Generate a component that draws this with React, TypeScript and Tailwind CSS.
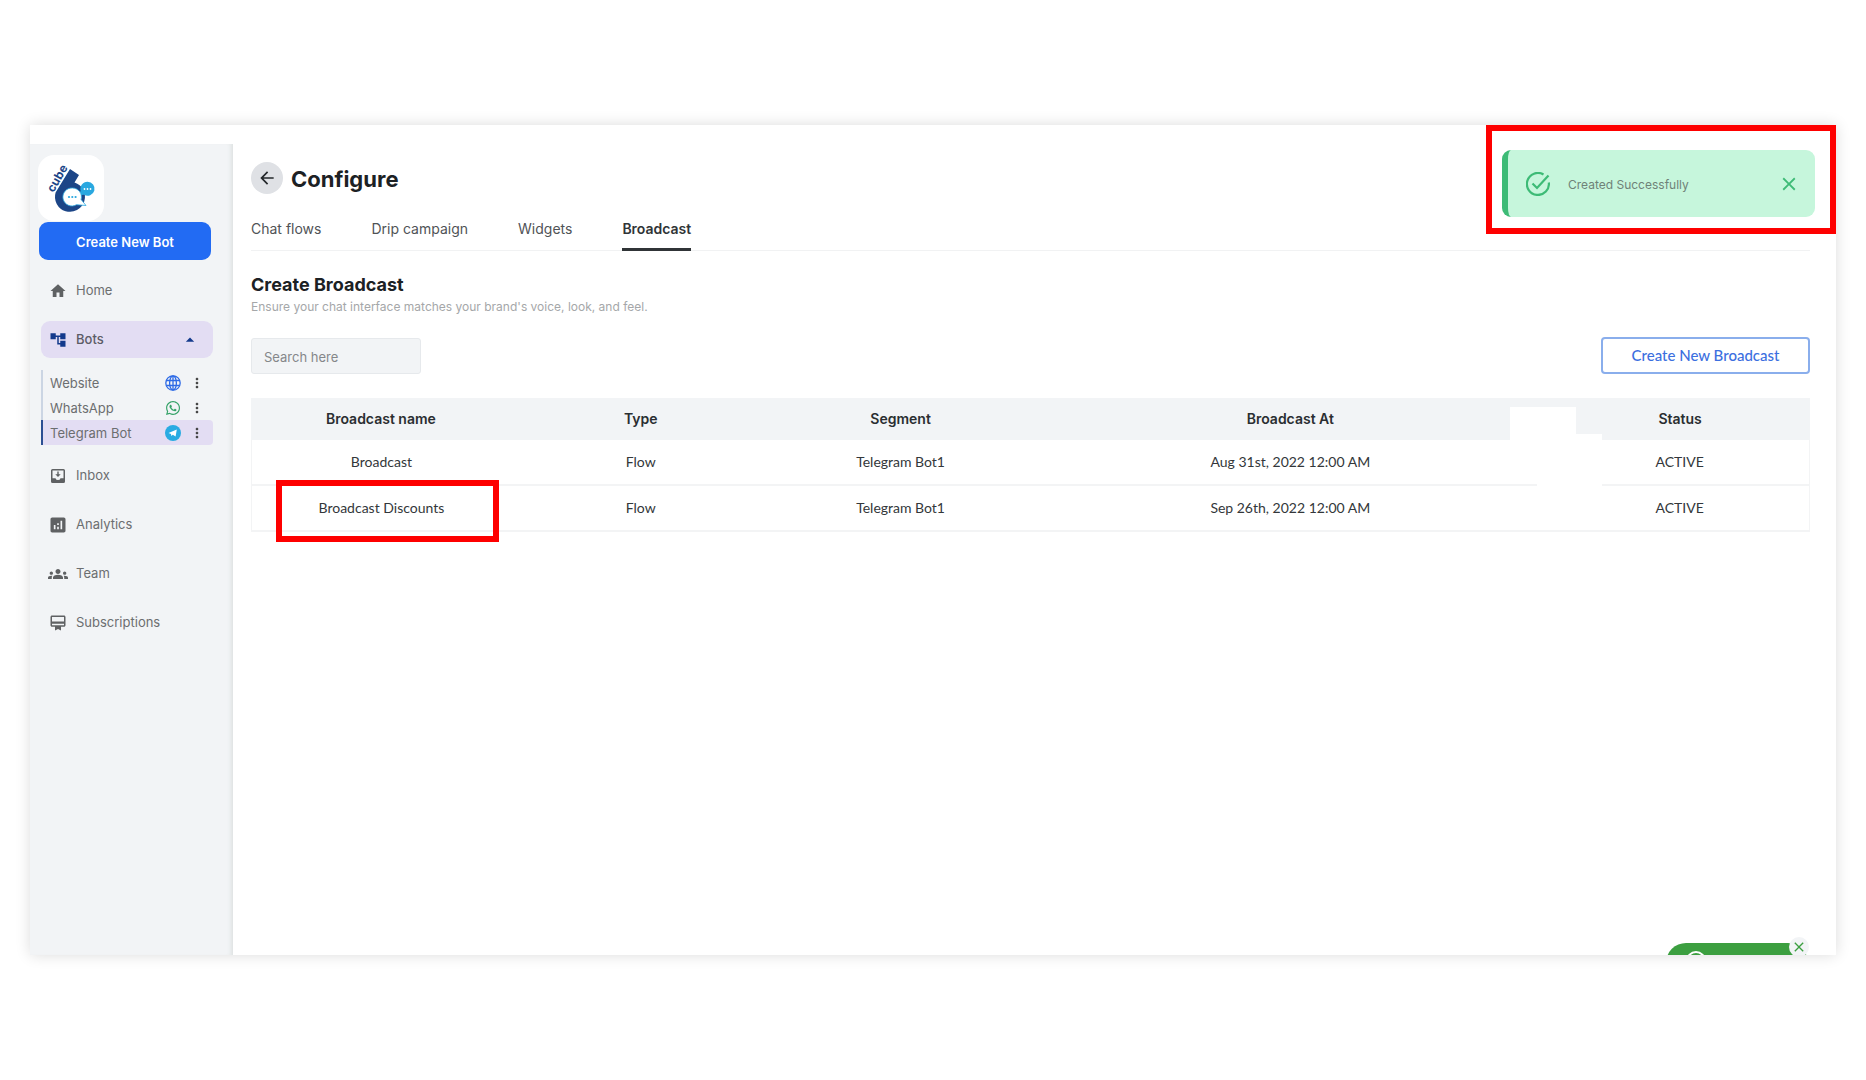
import { useState } from "react";
import { FaWhatsapp } from "react-icons/fa";
import {
  MdAccountTree,
  MdAnalytics,
  MdArrowBack,
  MdArrowDropUp,
  MdClose,
  MdGroups,
  MdHome,
  MdMoreVert,
  MdOutlineCardMembership,
} from "react-icons/md";

const tabs = ["Chat flows", "Drip campaign", "Widgets", "Broadcast"];

const rows = [
  { name: "Broadcast", type: "Flow", segment: "Telegram Bot1", at: "Aug 31st, 2022 12:00 AM", status: "ACTIVE" },
  {
    name: "Broadcast Discounts",
    type: "Flow",
    segment: "Telegram Bot1",
    at: "Sep 26th, 2022 12:00 AM",
    status: "ACTIVE",
    marked: true,
  },
];

function Logo() {
  return (
    <svg viewBox="0 0 66 66" className="size-full" aria-label="6cube">
      <path d="M32 14 41 20 36.500 27.500A15 15 0 1 1 17.600 37.500Z" fill="#1c4587" />
      <path d="M49.500 26.800a7 7 0 1 1-3.500 13l-7 .7 3.700-4.500a7 7 0 0 1 6.800-9.200Z" fill="#29a8e0" />
      <path
        d="M34.500 33a9 9 0 0 1 8.600 11.500L48 50.500l-9.500-.8A9 9 0 1 1 34.500 33Z"
        fill="#fff"
        stroke="#29a8e0"
        strokeWidth="0.8"
      />
      <g fill="#29a8e0">
        <circle cx="31" cy="42" r="1.100" />
        <circle cx="34.300" cy="42" r="1.100" />
        <circle cx="37.600" cy="42" r="1.100" />
      </g>
      <g fill="#fff">
        <circle cx="46.500" cy="34" r="0.900" />
        <circle cx="49.500" cy="34" r="0.900" />
        <circle cx="52.500" cy="34" r="0.900" />
      </g>
      <text
        transform="translate(15.500 38) rotate(-60)"
        fontSize="12"
        fontWeight="700"
        fill="#1c4587"
        className="font-[Inter]"
      >
        cube
      </text>
    </svg>
  );
}

function GlobeIcon() {
  return (
    <svg viewBox="0 0 16 16" className="size-4" fill="none" stroke="#2f6be6" strokeWidth="1.300">
      <circle cx="8" cy="8" r="7.200" />
      <ellipse cx="8" cy="8" rx="3.400" ry="7.200" />
      <path d="M8 1v14M1.500 5.500h13M1.500 10.500h13" />
    </svg>
  );
}

function TelegramIcon() {
  return (
    <svg viewBox="0 0 16 16" className="size-4">
      <circle cx="8" cy="8" r="8" fill="#29abe2" />
      <path d="M3.500 8 11.800 4.500 10.600 11.500 7.800 9.800 6.300 11 6 9Z" fill="#fff" />
    </svg>
  );
}

function InboxIcon() {
  return (
    <svg viewBox="0 0 16 16" className="size-4" fill="#5f6163">
      <path
        fillRule="evenodd"
        d="M2.500 1h11A1.500 1.500 0 0 1 15 2.500v11a1.500 1.500 0 0 1-1.500 1.500h-11A1.500 1.500 0 0 1 1 13.500v-11A1.500 1.500 0 0 1 2.500 1Zm0 1.500v7.700h3a2.600 2.600 0 0 0 5 0h3V2.500Z"
      />
      <path d="M7.300 3.500h1.400v2.700h2L8 9 5.300 6.200h2Z" />
    </svg>
  );
}

function CheckIcon() {
  return (
    <svg viewBox="0 0 24 24" className="size-6 shrink-0" fill="none" stroke="#3dbb76" strokeWidth="2.200">
      <path d="M22.800 10.500A11 11 0 1 1 17.500 2.500" />
      <path d="m6.500 11.500 4.500 4.500L22.500 3.500" />
    </svg>
  );
}

const bots = [
  { label: "Website", icon: <GlobeIcon /> },
  { label: "WhatsApp", icon: <FaWhatsapp className="size-4 text-[#35a268]" /> },
  { label: "Telegram Bot", icon: <TelegramIcon />, active: true },
];

const links = [
  { label: "Inbox", icon: <InboxIcon /> },
  { label: "Analytics", icon: <MdAnalytics className="size-5" /> },
  { label: "Team", icon: <MdGroups className="size-5" /> },
  { label: "Subscriptions", icon: <MdOutlineCardMembership className="size-[18px]" /> },
];

function NavLink({ label, icon }: { label: string; icon: React.ReactNode }) {
  return (
    <a href={`#${label.toLowerCase()}`} className="flex h-[37px] items-center gap-2 px-[7px] pt-px">
      <span className="flex w-5 justify-center text-[#5f6163]">{icon}</span>
      {label}
    </a>
  );
}

function Sidebar() {
  return (
    <aside className="mt-[19px] w-[203px] shrink-0 bg-[#f2f4f6] pl-2 pt-[11px] text-[13px] text-[#6c6e70] shadow-[inset_-5px_0_4px_-3px_#dde1e1]">
      <div className="size-[66px] rounded-2xl bg-white">
        <Logo />
      </div>
      <button
        type="button"
        className="mt-px ml-px h-[38px] w-[172px] rounded-[9px] bg-[#226bf3] pt-1 text-[13px] font-semibold text-white"
      >
        Create New Bot
      </button>

      <nav className="mt-3 ml-[3px] flex w-[172px] flex-col gap-3">
        <NavLink label="Home" icon={<MdHome className="size-[18px]" />} />
        <button
          type="button"
          className="flex h-[37px] items-center gap-2 rounded-[9px] bg-[#e3ddf3] px-[7px] pt-px font-medium text-[#5c5c66]"
        >
          <MdAccountTree className="mx-px size-[18px] text-[#133a8c]" />
          Bots
          <MdArrowDropUp className="mr-1.5 ml-auto size-5 text-[#133a8c]" />
        </button>
        <ul>
          {bots.map((b) => (
            <li
              key={b.label}
              className={`flex h-[25px] items-center border-l-2 pl-[7px] ${
                b.active ? "rounded-r-[4px] border-[#2c4f93] bg-[#e3ddf3]" : "border-[#cbd5e3]"
              }`}
            >
              <a href="#bots" className="flex-1 pt-0.5">
                {b.label}
              </a>
              {b.icon}
              <button type="button" aria-label={`${b.label} options`} className="mx-2 text-[#444]">
                <MdMoreVert className="size-4" />
              </button>
            </li>
          ))}
        </ul>
        {links.map((l) => (
          <NavLink key={l.label} label={l.label} icon={l.icon} />
        ))}
      </nav>
    </aside>
  );
}

function BroadcastTable() {
  return (
    <div className="relative mt-6 font-[Lato,sans-serif]">
      <table className="w-full table-fixed border-separate border-spacing-0 text-center text-sm text-[#33373a]">
        <thead>
          <tr className="h-[42px] bg-[#f2f4f6] font-[Inter,sans-serif] text-[#2a2e31]">
            <th className="w-1/6 font-semibold">Broadcast name</th>
            <th className="w-1/6 font-semibold">Type</th>
            <th className="w-1/6 font-semibold">Segment</th>
            <th className="w-1/3 font-semibold">Broadcast At</th>
            <th className="w-1/6 font-semibold">Status</th>
          </tr>
        </thead>
        <tbody>
          {rows.map((r) => (
            <tr key={r.name} className="h-[46px]">
              <td className="relative border-b-2 border-l border-[#f3f4f5]">
                {r.name}
                {r.marked && (
                  <span className="pointer-events-none absolute -top-1.5 right-3 -bottom-3 left-6 border-6 border-[#fe0000]" />
                )}
              </td>
              <td className="border-b-2 border-[#f3f4f5]">{r.type}</td>
              <td className="border-b-2 border-[#f3f4f5]">{r.segment}</td>
              <td className="border-b-2 border-[#f3f4f5]">{r.at}</td>
              <td className="border-r border-b-2 border-[#f3f4f5]">{r.status}</td>
            </tr>
          ))}
        </tbody>
      </table>
      {/* blanked out cells */}
      <div className="absolute top-[9px] right-[234px] h-[33px] w-[66px] bg-white" />
      <div className="absolute top-9 right-[208px] h-[53px] w-[65px] bg-white" />
    </div>
  );
}

export default function App() {
  const [tab, setTab] = useState("Broadcast");

  return (
    <div className="flex min-h-screen bg-white px-[30px] py-[125px] font-[Inter,sans-serif]">
      <div className="relative flex flex-1 overflow-hidden bg-white shadow-[0_0_14px_rgba(0,0,0,0.14)]">
        <Sidebar />

        <main className="min-w-0 flex-1 pt-[37px] pr-[26px] pl-[18px]">
          <div className="flex items-center gap-2">
            <button
              type="button"
              aria-label="Back"
              className="flex size-8 items-center justify-center rounded-full bg-[#dfe1e5] text-[#24282b]"
            >
              <MdArrowBack className="size-5" />
            </button>
            <h1 className="pt-0.5 text-[22px] leading-[30px] font-bold text-[#1c2124]">Configure</h1>
          </div>

          <div className="mt-[13px] flex gap-[50px] border-b border-[#f1f2f3] text-sm text-[#505356]">
            {tabs.map((t) => (
              <button
                key={t}
                type="button"
                onClick={() => setTab(t)}
                className={`-mb-px h-11 border-b-3 pt-[3px] ${
                  t === tab ? "border-[#303437] font-semibold text-[#303437]" : "border-transparent"
                }`}
              >
                {t}
              </button>
            ))}
          </div>

          <h2 className="mt-[22px] text-lg leading-6 font-bold text-[#1c2124]">Create Broadcast</h2>
          <p className="text-xs leading-5 text-[#a5a7a9]">
            Ensure your chat interface matches your brand's voice, look, and feel.
          </p>

          <div className="mt-5 flex items-center justify-between">
            <input
              type="text"
              aria-label="Search"
              placeholder="Search here"
              className="h-9 w-[170px] rounded-[3px] border border-[#e6e9ec] bg-[#f2f4f6] px-3 pt-0.5 text-[13px] placeholder:text-[#85878a]"
            />
            <button
              type="button"
              className="h-[37px] w-[209px] rounded-[4px] border-2 border-[#8aaeec] font-[Lato,sans-serif] text-[15px] font-medium text-[#3c6fe0]"
            >
              Create New Broadcast
            </button>
          </div>

          <BroadcastTable />
        </main>

        <div className="absolute top-0 right-0 h-[109px] w-[350px] border-6 border-[#fe0000] pt-[19px] pr-[15px] pl-2.5">
          <div
            role="status"
            className="flex h-[67px] items-center rounded-[9px] border-l-6 border-[#3dbb76] bg-[#c6f6dc] pr-[15px] pl-[18px] text-xs text-[#6f8278]"
          >
            <CheckIcon />
            <span className="ml-[18px] flex-1 pt-0.5">Created Successfully</span>
            <button type="button" aria-label="Close" className="text-[#3dbb76]">
              <MdClose className="size-[22px]" />
            </button>
          </div>
        </div>

        {/* chat widget, cut off by the bottom of the panel */}
        <div className="absolute right-7 -bottom-7 h-10 w-[142px] rounded-full bg-[#3c9f40] pt-2 pl-5">
          <div className="size-5 rounded-full border-2 border-white" />
        </div>
        <button
          type="button"
          aria-label="Close chat"
          className="absolute right-[27px] -bottom-0.5 flex size-5 items-center justify-center rounded-full bg-[#f2f4f6] text-[#3c9f40]"
        >
          <MdClose className="size-4" />
        </button>
      </div>
    </div>
  );
}
